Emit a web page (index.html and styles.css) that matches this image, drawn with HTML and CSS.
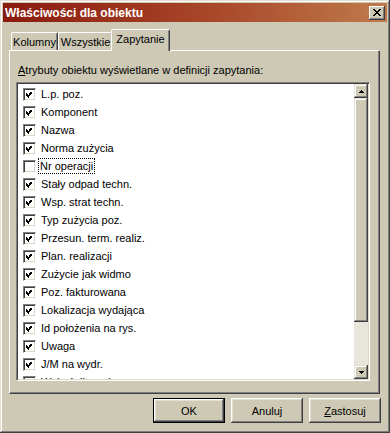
FILE: index.html
```html
<!DOCTYPE html>
<html>
<head>
    <meta charset="utf-8">
    <title>Właściwości dla obiektu</title>
    <link rel="stylesheet" href="styles.css">
</head>
<body>
    <svg class="defs" width="0" height="0">
        <symbol id="chk" viewBox="0 0 7 7">
            <path d="M6 0h1v1h-1z M5 1h2v1h-2z M0 2h1v1h-1z M4 2h3v1h-3z M0 3h2v1h-2z M3 3h3v1h-3z M0 4h5v1h-5z M1 5h3v1h-3z M2 6h1v1h-1z"/>
        </symbol>
    </svg>

    <div class="window">
        <div class="titlebar">
            <span class="title">Właściwości dla obiektu</span>
            <span class="close">
                <svg width="8" height="7" viewBox="0 0 8 7" shape-rendering="crispEdges"><path d="M0 0h2v1h-2z M6 0h2v1h-2z M1 1h2v1h-2z M5 1h2v1h-2z M2 2h4v1h-4z M3 3h2v1h-2z M2 4h4v1h-4z M1 5h2v1h-2z M5 5h2v1h-2z M0 6h2v1h-2z M6 6h2v1h-2z"/></svg>
            </span>
        </div>

        <div class="tabs">
            <div class="tab tab-kolumny">Kolumny</div>
            <div class="tab tab-wszystkie">Wszystkie</div>
            <div class="tab tab-active">Zapytanie</div>
        </div>

        <div class="panel">
            <div class="label"><u>A</u>trybuty obiektu wyświetlane w definicji zapytania:</div>
            <div class="list">
                <div class="items">
                    <div class="row"><span class="cb"><svg><use href="#chk"/></svg></span>L.p. poz.</div>
                    <div class="row"><span class="cb"><svg><use href="#chk"/></svg></span>Komponent</div>
                    <div class="row"><span class="cb"><svg><use href="#chk"/></svg></span>Nazwa</div>
                    <div class="row"><span class="cb"><svg><use href="#chk"/></svg></span>Norma zużycia</div>
                    <div class="row"><span class="cb"></span><span class="focus">Nr operacji</span></div>
                    <div class="row"><span class="cb"><svg><use href="#chk"/></svg></span>Stały odpad techn.</div>
                    <div class="row"><span class="cb"><svg><use href="#chk"/></svg></span>Wsp. strat techn.</div>
                    <div class="row"><span class="cb"><svg><use href="#chk"/></svg></span>Typ zużycia poz.</div>
                    <div class="row"><span class="cb"><svg><use href="#chk"/></svg></span>Przesun. term. realiz.</div>
                    <div class="row"><span class="cb"><svg><use href="#chk"/></svg></span>Plan. realizacji</div>
                    <div class="row"><span class="cb"><svg><use href="#chk"/></svg></span>Zużycie jak widmo</div>
                    <div class="row"><span class="cb"><svg><use href="#chk"/></svg></span>Poz. fakturowana</div>
                    <div class="row"><span class="cb"><svg><use href="#chk"/></svg></span>Lokalizacja wydająca</div>
                    <div class="row"><span class="cb"><svg><use href="#chk"/></svg></span>Id położenia na rys.</div>
                    <div class="row"><span class="cb"><svg><use href="#chk"/></svg></span>Uwaga</div>
                    <div class="row"><span class="cb"><svg><use href="#chk"/></svg></span>J/M na wydr.</div>
                    <div class="row"><span class="cb"><svg><use href="#chk"/></svg></span>Wskaźnik wydr.</div>
                </div>
                <div class="scrollbar">
                    <div class="sb-btn">
                        <svg width="5" height="3" viewBox="0 0 5 3" shape-rendering="crispEdges"><path d="M2 0h1v1h-1z M1 1h3v1h-3z M0 2h5v1h-5z"/></svg>
                    </div>
                    <div class="sb-thumb"></div>
                    <div class="sb-track"></div>
                    <div class="sb-btn">
                        <svg width="5" height="3" viewBox="0 0 5 3" shape-rendering="crispEdges"><path d="M0 0h5v1h-5z M1 1h3v1h-3z M2 2h1v1h-1z"/></svg>
                    </div>
                </div>
            </div>
        </div>

        <div class="buttons">
            <div class="btn btn-default"><span>OK</span></div>
            <div class="btn"><span>Anuluj</span></div>
            <div class="btn"><span><u>Z</u>astosuj</span></div>
        </div>
    </div>
</body>
</html>
```

FILE: styles.css
```css
body {
    margin: 0;
    background: #cdc9b4;
    font: 11px "Liberation Sans", Arial, sans-serif;
    color: #000;
}

.defs {
    position: absolute;
}

.window {
    width: 390px;
    height: 433px;
    box-sizing: border-box;
    padding: 3px;
    background: #cdc9b4;
    box-shadow: inset -1px -1px #404040, inset 1px 1px #e2dfd0,
                inset -2px -2px #808080, inset 2px 2px #fff;
    display: flex;
    flex-direction: column;
}

.titlebar {
    height: 19px;
    display: flex;
    align-items: center;
    justify-content: space-between;
    padding: 0 2px;
    background: linear-gradient(to right, #8a1a0e, #a8482a 55%, #c07a4c);
}

.title {
    color: #fff;
    font-weight: bold;
    font-size: 12px;
}

.close {
    width: 16px;
    height: 14px;
    box-sizing: border-box;
    background: #cdc9b4;
    box-shadow: inset -1px -1px #404040, inset 1px 1px #fff,
                inset -2px -2px #808080;
    display: flex;
    align-items: center;
    justify-content: center;
}

.tabs {
    display: flex;
    align-items: flex-end;
    height: 21px;
    margin: 7px 0 0 6px;
    padding-left: 2px;
}

.tab {
    height: 18px;
    box-sizing: border-box;
    display: flex;
    align-items: center;
    justify-content: center;
    border-top: 1px solid #fff;
    border-left: 1px solid #fff;
    border-right: 1px solid #404040;
    border-radius: 2px 2px 0 0;
    box-shadow: inset -1px 0 #808080;
}

.tab-kolumny {
    width: 47px;
}

.tab-wszystkie {
    width: 55px;
}

.tab-active {
    width: 59px;
    height: 22px;
    margin: 0 -2px -1px -2px;
    padding-bottom: 3px;
    background: #cdc9b4;
    position: relative;
    z-index: 1;
}

.panel {
    width: 371px;
    height: 344px;
    box-sizing: border-box;
    margin-left: 6px;
    padding: 0 0 0 6px;
    border-top: 1px solid #fff;
    border-left: 1px solid #fff;
    border-right: 1px solid #404040;
    border-bottom: 1px solid #404040;
    box-shadow: inset -1px -1px #808080;
}

.label {
    height: 13px;
    line-height: 13px;
    margin-top: 13px;
    padding-left: 2px;
}

.list {
    width: 354px;
    height: 299px;
    box-sizing: border-box;
    margin-top: 5px;
    border-top: 1px solid #808080;
    border-left: 1px solid #808080;
    border-right: 1px solid #fff;
    border-bottom: 1px solid #fff;
    box-shadow: inset 1px 1px #404040, inset -1px -1px #dcd8c8;
    padding: 1px;
    display: flex;
    background: #fff;
    overflow: hidden;
}

.items {
    flex: 1;
    padding-top: 1px;
    overflow: hidden;
}

.row {
    height: 18px;
    display: flex;
    align-items: center;
    padding-left: 5px;
    white-space: nowrap;
}

.cb {
    width: 13px;
    height: 13px;
    box-sizing: border-box;
    margin-right: 5px;
    padding: 3px;
    background: #fff;
    border-top: 1px solid #808080;
    border-left: 1px solid #808080;
    border-right: 1px solid #fff;
    border-bottom: 1px solid #fff;
    box-shadow: inset 1px 1px #404040, inset -1px -1px #dcd8c8;
    display: flex;
}

.cb svg {
    width: 7px;
    height: 7px;
    margin: -1px 0 0 -1px;
    shape-rendering: crispEdges;
}

.focus {
    outline: 1px dotted #000;
    padding: 1px 1px;
    margin-left: -2px;
}

.scrollbar {
    width: 14px;
    display: flex;
    flex-direction: column;
}

.sb-btn, .sb-thumb {
    background: #cdc9b4;
    box-shadow: inset -1px -1px #404040, inset 1px 1px #e2dfd0,
                inset -2px -2px #808080, inset 2px 2px #fff;
}

.sb-btn {
    height: 14px;
    display: flex;
    align-items: center;
    justify-content: center;
}

.sb-thumb {
    height: 224px;
}

.sb-track {
    flex: 1;
    background: #e8e6dc;
}

.buttons {
    display: flex;
    justify-content: flex-end;
    gap: 6px;
    margin-top: 4px;
    padding-right: 6px;
}

.btn {
    width: 72px;
    height: 25px;
    box-sizing: border-box;
    display: flex;
    align-items: center;
    justify-content: center;
    box-shadow: inset -1px -1px #404040, inset 1px 1px #fff,
                inset -2px -2px #808080, inset 2px 2px #e2dfd0;
}

.btn-default {
    border: 1px solid #000;
}
```
